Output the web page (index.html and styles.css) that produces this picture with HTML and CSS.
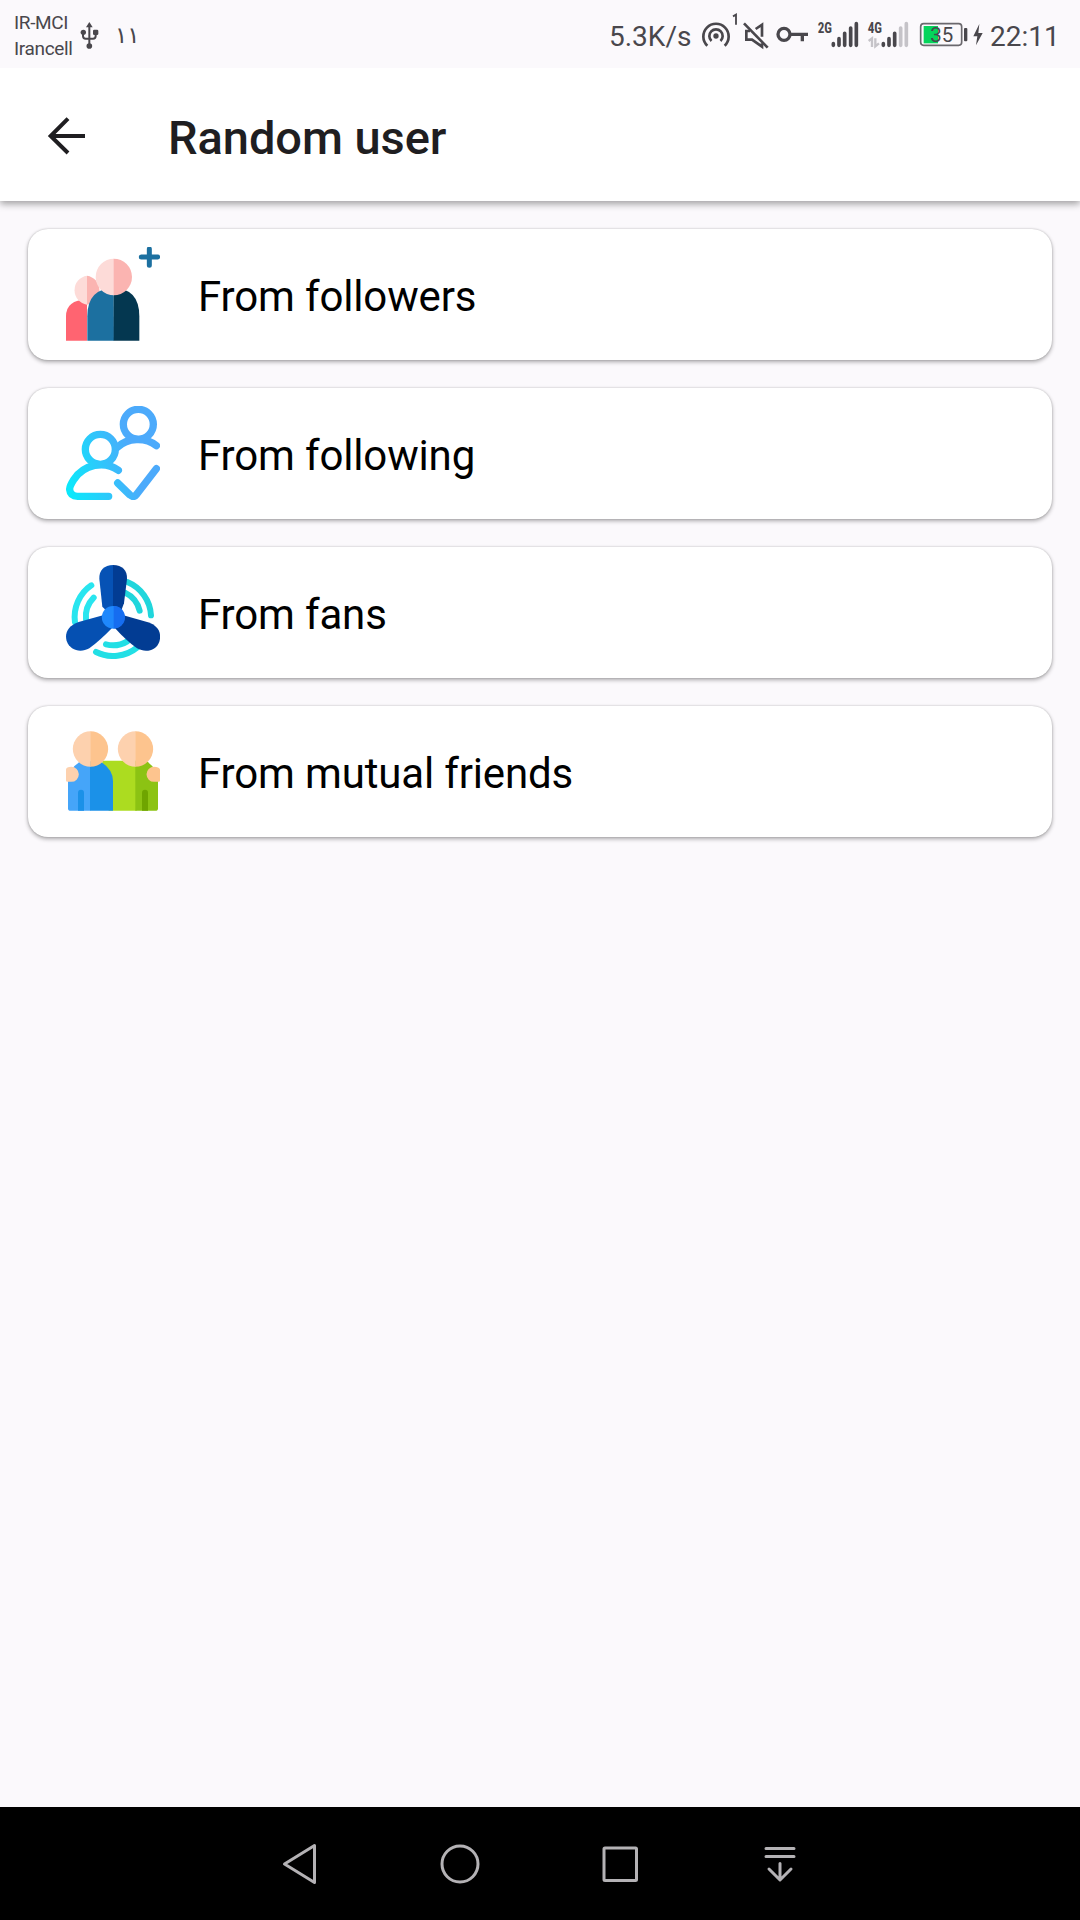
FILE: index.html
```html
<!DOCTYPE html>
<html lang="en">
<head>
<meta charset="utf-8">
<title>Random user</title>
<link rel="stylesheet" href="styles.css">
</head>
<body>
<div class="screen">
  <div class="status-bar">
    <div class="carriers"><span>IR-MCI</span><span>Irancell</span></div>
    <svg class="usb" viewBox="240 0 60 204" width="20" height="68">
      <g fill="none" stroke="#49474c" stroke-width="6"><path d="M268 138V78M249 98v10q0 8 8 8h22q8 0 8-8V98"/></g>
      <g fill="#49474c"><path d="M268 66l10 16h-20z"/><circle cx="250" cy="97" r="8"/><rect x="279" y="89" width="16" height="16" rx="4"/><circle cx="268" cy="138" r="8.500"/></g>
    </svg>
    <span class="notice">۱۱</span>
    <div class="indicators">
      <span class="speed">5.3K/s</span>
      <svg viewBox="300 0 126 204" width="42" height="68">
        <g fill="none" stroke="#49474c" stroke-width="8"><path d="M322 137A38 38 0 1 1 374 137"/><path d="M334.500 123A20 20 0 1 1 361.500 123"/></g>
        <circle cx="348" cy="108" r="8" fill="#49474c"/>
        <path d="M399 49l9-5v30" fill="none" stroke="#49474c" stroke-width="5.500"/>
      </svg>
      <svg viewBox="426 0 84 204" width="28" height="68">
        <g fill="none" stroke="#49474c" stroke-width="8"><path d="M432 70L503 143"/><path d="M450 93H439V119H456L486 140V130"/><path d="M467 87L486 74V110"/></g>
      </svg>
      <svg class="key" viewBox="528 0 99 204" width="33" height="68">
        <g fill="none" stroke="#49474c"><circle cx="552" cy="103" r="18" stroke-width="10"/><path d="M571 103H624M607 103V124" stroke-width="10"/></g>
      </svg>
      <svg class="signal" viewBox="48 0 132 204" width="44" height="68">
        <text class="net" x="53" y="99" textLength="43" lengthAdjust="spacingAndGlyphs">2G</text>
        <g class="bars"><path d="M100 131v5M117 116v20M134 100v36M152 84v52M169 71v65"/></g>
      </svg>
      <svg class="signal" viewBox="198 0 132 204" width="44" height="68">
        <text class="net" x="203" y="99" textLength="43" lengthAdjust="spacingAndGlyphs">4G</text>
        <path d="M206 123l10-8v26M226 115v24l11-9" fill="none" stroke="#c5c3c8" stroke-width="7"/>
        <g class="bars"><path d="M250 131v5M267 116v20M284 100v36"/><path class="off" d="M302 84v52M319 71v65"/></g>
      </svg>
      <svg class="battery" viewBox="354 0 153 204" width="51" height="68">
        <rect x="362" y="71" width="123" height="65" rx="9" fill="none" stroke="#6a686d" stroke-width="5"/>
        <rect x="371" y="78" width="43" height="52" fill="#05d45b"/>
        <rect x="492" y="84" width="10" height="40" rx="3" fill="#49474c"/>
        <text class="level" x="391" y="125" textLength="69" lengthAdjust="spacingAndGlyphs">35</text>
      </svg>
      <svg viewBox="516 0 36 204" width="12" height="68"><path d="M538 72L520 109h12l-4 27 20-37h-13z" fill="#49474c"/></svg>
      <span class="clock">22:11</span>
    </div>
  </div>

  <header class="app-bar">
    <svg class="back" viewBox="141 108 120 120" width="40" height="40"><path d="M204 116L152 168L204 219M151 168H255" fill="none" stroke="#1f1e21" stroke-width="12"/></svg>
    <h1>Random user</h1>
  </header>

  <main class="options">
    <div class="card">
      <svg viewBox="138 82 282 282" width="94" height="94">
        <path d="M138 363V290Q138 240 201 240V363z" fill="#ff6471"/>
        <path d="M201 168A44 44 0 0 0 201 255z" fill="#fddbd8"/><path d="M201 168A44 44 0 0 1 201 255z" fill="#fbb4b1"/>
        <path d="M281 205Q202 206 202 290V363H282z" fill="#1c70a0"/>
        <path d="M281 205Q358 206 358 290V363H281z" fill="#043750"/>
        <path d="M282 117A55 55 0 0 0 282 227z" fill="#fddbd8"/><path d="M281 117A55 55 0 0 1 281 227z" fill="#fbb4b1"/>
        <path d="M388 88V137M364 112H413" stroke="#1c70a0" stroke-width="15" stroke-linecap="round"/>
      </svg>
      <span>From followers</span>
    </div>
    <div class="card">
      <svg viewBox="138 78 282 282" width="94" height="94">
        <defs><linearGradient id="aqua" gradientUnits="userSpaceOnUse" x1="140" y1="300" x2="340" y2="240"><stop offset="0" stop-color="#0ce8fb"/><stop offset="1" stop-color="#4caafb"/></linearGradient></defs>
        <g fill="none" stroke="url(#aqua)" stroke-width="22" stroke-linecap="round" stroke-linejoin="round">
          <circle cx="355" cy="133" r="45"/><circle cx="241" cy="208" r="45"/>
          <path d="M292 202C322 173 376 170 409 197"/>
          <path d="M295 271C252 240 192 254 162 298Q148 320 149 329Q151 349 173 349H266"/>
          <path d="M293 309L330 345Q341 354 350 343L409 266"/>
        </g>
      </svg>
      <span>From following</span>
    </div>
    <div class="card">
      <svg viewBox="138 75 282 282" width="94" height="94">
        <g fill="none" stroke-width="18" stroke-linecap="round">
          <path d="M214 136A115 115 0 0 0 165 247M221 173A82 82 0 0 0 198 238" stroke="#28e5ef"/>
          <path d="M322 126A115 115 0 0 1 393 226M315 158A82 82 0 0 1 359 212" stroke="#20d6dc"/>
          <path d="M228 336A115 115 0 0 0 352 322M258 313A84 84 0 0 0 322 304" stroke="#22dfe5"/>
        </g>
        <path d="M280 75C252 75 237 91 238 116L247 200L263 216L280 210z" fill="#0652b5"/>
        <path d="M279 75C307 75 322 91 321 116L312 190L304 211L279 216z" fill="#023c93"/>
        <path d="M249 226L176 246C145 257 133 278 140 303C150 331 181 340 208 325Q241 300 277 263z" fill="#0550b2"/>
        <path d="M310 226L384 247C414 257 426 278 418 305C409 331 378 340 351 325Q316 299 284 263z" fill="#023c93"/>
        <circle cx="279.500" cy="232" r="34" fill="#1f88fc"/><path d="M281 198A34 34 0 0 1 281 266z" fill="#166df0"/>
      </svg>
      <span>From fans</span>
    </div>
    <div class="card">
      <svg viewBox="138 71.500 282 282" width="94" height="94">
        <path d="M246 182H350V332H266z" fill="#acdc20"/>
        <path d="M346 182H378Q414 205 414 245V324Q414 332 406 332H346z" fill="#8cc313"/>
        <path d="M211 183H183Q144 205 144 245V324Q144 332 152 332H211z" fill="#45a5f9"/>
        <path d="M210 183H240Q279 207 279 243V332H210z" fill="#1b91e8"/>
        <path d="M174 332V278a9 9 0 0 1 18 0V332z" fill="#1b91e8"/>
        <path d="M366 332V278a9 9 0 0 1 18 0V332z" fill="#6fa500"/>
        <path d="M212 93A53 53 0 0 0 212 200z" fill="#fdd1ae"/><path d="M211 93A53.500 53.500 0 0 1 211 200z" fill="#fdc48e"/>
        <path d="M347 93A53 53 0 0 0 347 200z" fill="#fdd1ae"/><path d="M346 93A53.500 53.500 0 0 1 346 200z" fill="#fdc48e"/>
        <path d="M138 208Q139 200 154 200A22.500 22.500 0 0 1 154 245H142Q138 245 138 241z" fill="#fdd1ae"/>
        <path d="M420 208Q417 200 402 200A22.500 22.500 0 0 0 402 245H416Q420 245 420 241z" fill="#fdc48e"/>
      </svg>
      <span>From mutual friends</span>
    </div>
  </main>

  <nav class="nav-bar">
    <svg viewBox="-24 -24 48 48" width="48" height="48"><path d="M14.500-18.500V18.500L-15.500 0z"/></svg>
    <svg viewBox="-24 -24 48 48" width="48" height="48"><circle r="18"/></svg>
    <svg viewBox="-24 -24 48 48" width="48" height="48"><rect x="-16" y="-16" width="32.500" height="32.500" rx="1"/></svg>
    <svg viewBox="-24 -24 48 48" width="48" height="48"><path d="M-14-15.500H14M-14-7.500H14M0-.500V15M-11 5L0 16L11 5"/></svg>
  </nav>
</div>
</body>
</html>
```
FILE: styles.css
```css
body {
  margin: 0;
  font-family: Roboto, "Liberation Sans", sans-serif;
}

.screen {
  display: flex;
  flex-direction: column;
  width: 1080px;
  height: 1920px;
  background: #fbf9fc;
  overflow: hidden;
}

.status-bar {
  position: relative;
  z-index: 1;
  display: flex;
  align-items: center;
  height: 68px;
  padding-left: 14px;
  background: #fbf9fc;
  color: #49474c;
  white-space: nowrap;
}

.status-bar svg {
  flex: none;
}

.carriers {
  display: flex;
  flex-direction: column;
  width: 66px;
  padding-top: 3px;
  font-size: 19px;
  line-height: 26px;
  letter-spacing: -0.35px;
}

.notice {
  width: 30px;
  margin-left: 15px;
  padding-top: 2px;
  font-family: "DejaVu Sans", sans-serif;
  font-size: 23px;
  letter-spacing: -3px;
}

.indicators {
  display: flex;
  align-items: center;
  margin-left: auto;
  width: 471px;
}

.speed {
  width: 91px;
  padding-top: 5px;
  font-size: 28px;
}

.key {
  margin-left: 6px;
}

.signal {
  margin-left: 6px;
}

.key + .signal {
  margin-left: 7px;
}

.net {
  font: 700 44px "Roboto Condensed", Roboto, sans-serif;
  fill: #49474c;
}

.bars {
  fill: none;
  stroke: #49474c;
  stroke-width: 11;
  stroke-linecap: round;
}

.off {
  stroke: #c5c3c8;
}

.battery {
  margin: 0 3px 0 8px;
}

.level {
  font: 400 60px Roboto, sans-serif;
  fill: #49474c;
}

.clock {
  margin-left: 6px;
  padding-top: 5px;
  font-size: 28px;
}

.app-bar {
  display: flex;
  align-items: center;
  height: 133px;
  padding-left: 47px;
  background: #fff;
  box-shadow: 0 3px 7px rgba(0, 0, 0, 0.36);
}

.back {
  margin-top: 2px;
}

.app-bar h1 {
  margin: 6px 0 0 81px;
  font-size: 47px;
  font-weight: 500;
  line-height: 56px;
  letter-spacing: -0.05px;
  color: #1f1e21;
}

.options {
  display: flex;
  flex: 1;
  flex-direction: column;
  gap: 28px;
  padding: 28px;
}

.card {
  display: flex;
  align-items: center;
  gap: 38px;
  height: 131px;
  padding-left: 38px;
  border-radius: 20px;
  background: #fff;
  box-shadow: 0 2px 4px rgba(0, 0, 0, 0.32), 0 0 2px rgba(0, 0, 0, 0.2);
  font-size: 42px;
  letter-spacing: -0.15px;
  color: #000;
}

.card svg {
  margin-top: -2px;
}

.card span {
  padding-top: 4px;
}

.nav-bar {
  display: flex;
  align-items: center;
  gap: 112px;
  height: 113px;
  padding-left: 276px;
  background: #000;
}

.nav-bar svg {
  fill: none;
  stroke: #b4b2b5;
  stroke-width: 3;
  stroke-linejoin: round;
  stroke-linecap: round;
}
```
